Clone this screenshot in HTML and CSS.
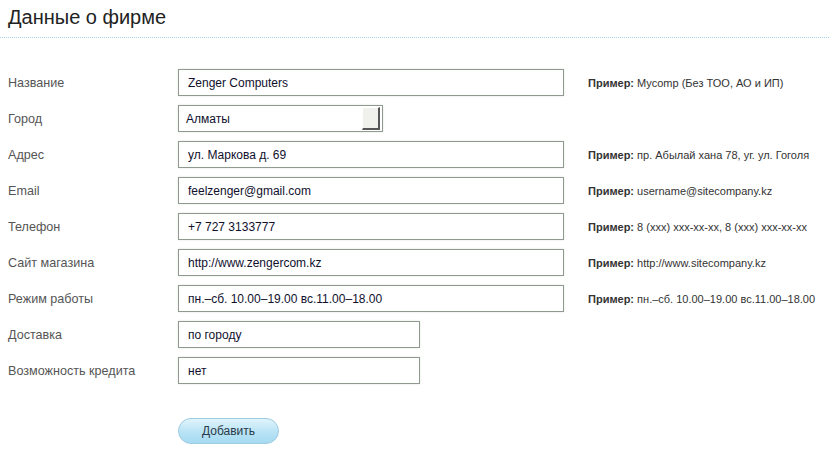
FILE: index.html
```html
<!DOCTYPE html>
<html lang="ru">
<head>
<meta charset="utf-8">
<title>Данные о фирме</title>
<link rel="stylesheet" href="styles.css">
</head>
<body>
<div class="header">
  <h1 class="title">Данные о фирме</h1>
</div>
<form class="form">
  <div class="grid">
    <label class="label">Название</label>
    <input class="field" type="text" value="Zenger Computers">
    <div class="hint"><b>Пример:</b> <span>Mycomp (Без ТОО, АО и ИП)</span></div>

    <label class="label">Город</label>
    <div class="select"><span class="select-text">Алматы</span><span class="select-btn"></span></div>
    <div class="hint"></div>

    <label class="label">Адрес</label>
    <input class="field" type="text" value="ул. Маркова д. 69">
    <div class="hint"><b>Пример:</b> <span>пр. Абылай хана 78, уг. ул. Гоголя</span></div>

    <label class="label">Email</label>
    <input class="field" type="text" value="feelzenger@gmail.com">
    <div class="hint"><b>Пример:</b> <span>username@sitecompany.kz</span></div>

    <label class="label">Телефон</label>
    <input class="field" type="text" value="+7 727 3133777">
    <div class="hint"><b>Пример:</b> <span>8 (xxx) xxx-xx-xx, 8 (xxx) xxx-xx-xx</span></div>

    <label class="label">Сайт магазина</label>
    <input class="field" type="text" value="http://www.zengercom.kz">
    <div class="hint"><b>Пример:</b> <span>http://www.sitecompany.kz</span></div>

    <label class="label">Режим работы</label>
    <input class="field" type="text" value="пн.–сб. 10.00–19.00 вс.11.00–18.00">
    <div class="hint"><b>Пример:</b> <span>пн.–сб. 10.00–19.00 вс.11.00–18.00</span></div>

    <label class="label">Доставка</label>
    <input class="field short" type="text" value="по городу">
    <div class="hint"></div>

    <label class="label">Возможность кредита</label>
    <input class="field short" type="text" value="нет">
    <div class="hint"></div>
  </div>
  <div class="actions">
    <button class="add-btn" type="button">Добавить</button>
  </div>
</form>
</body>
</html>
```
FILE: styles.css
```css
html, body {
  margin: 0;
  padding: 0;
  background: #ffffff;
  font-family: "Liberation Sans", Arial, sans-serif;
}
.header {
  height: 38px;
  border-bottom: 1px dotted #a6d6e6;
  padding: 0 8px;
  box-sizing: border-box;
}
.title {
  margin: 0;
  padding-top: 5px;
  font-size: 20px;
  font-weight: normal;
  color: #222222;
  line-height: 24px;
}
.form {
  margin: 0;
  padding: 31px 0 0 8px;
}
.grid {
  display: grid;
  grid-template-columns: 170px 386px auto;
  grid-auto-rows: 27px;
  row-gap: 9px;
  column-gap: 0;
  align-items: center;
}
.label {
  font-size: 12.6px;
  color: #555555;
}
.field {
  box-sizing: border-box;
  width: 386px;
  height: 27px;
  margin: 0;
  border: 1px solid #8e9a8e;
  padding: 0 9px;
  font-family: "Liberation Sans", Arial, sans-serif;
  font-size: 12px;
  color: #10102e;
  background: #ffffff;
  outline: none;
  box-shadow: 0 0 2px #e4e4e4;
}
.field.short {
  width: 242px;
}
.select {
  box-sizing: border-box;
  width: 205px;
  height: 27px;
  border: 1px solid #8e9a8e;
  display: flex;
  align-items: center;
  justify-content: space-between;
  padding: 1px 2px 1px 7px;
  background: #ffffff;
  box-shadow: 0 0 2px #e4e4e4;
}
.select-text {
  font-size: 12px;
  color: #10102e;
}
.select-btn {
  box-sizing: border-box;
  width: 18px;
  height: 23px;
  background: #f0f0ec;
  border-top: 1px solid #ffffff;
  border-left: 1px solid #ffffff;
  border-right: 2px solid #555555;
  border-bottom: 2px solid #555555;
}
.hint {
  padding-left: 24px;
  font-size: 11px;
  color: #333333;
  white-space: nowrap;
}
.hint b {
  color: #333333;
}
.hint span {
  font-size: 11px;
}
.actions {
  padding: 34px 0 0 170px;
}
.add-btn {
  width: 101px;
  height: 26px;
  border: 1px solid #9ccbe2;
  border-radius: 13px;
  background: linear-gradient(#e0f4fc, #b9e3f5 55%, #a6daf1);
  font-family: "Liberation Sans", Arial, sans-serif;
  font-size: 12px;
  color: #2b3a48;
  padding: 0;
  cursor: pointer;
}
```
